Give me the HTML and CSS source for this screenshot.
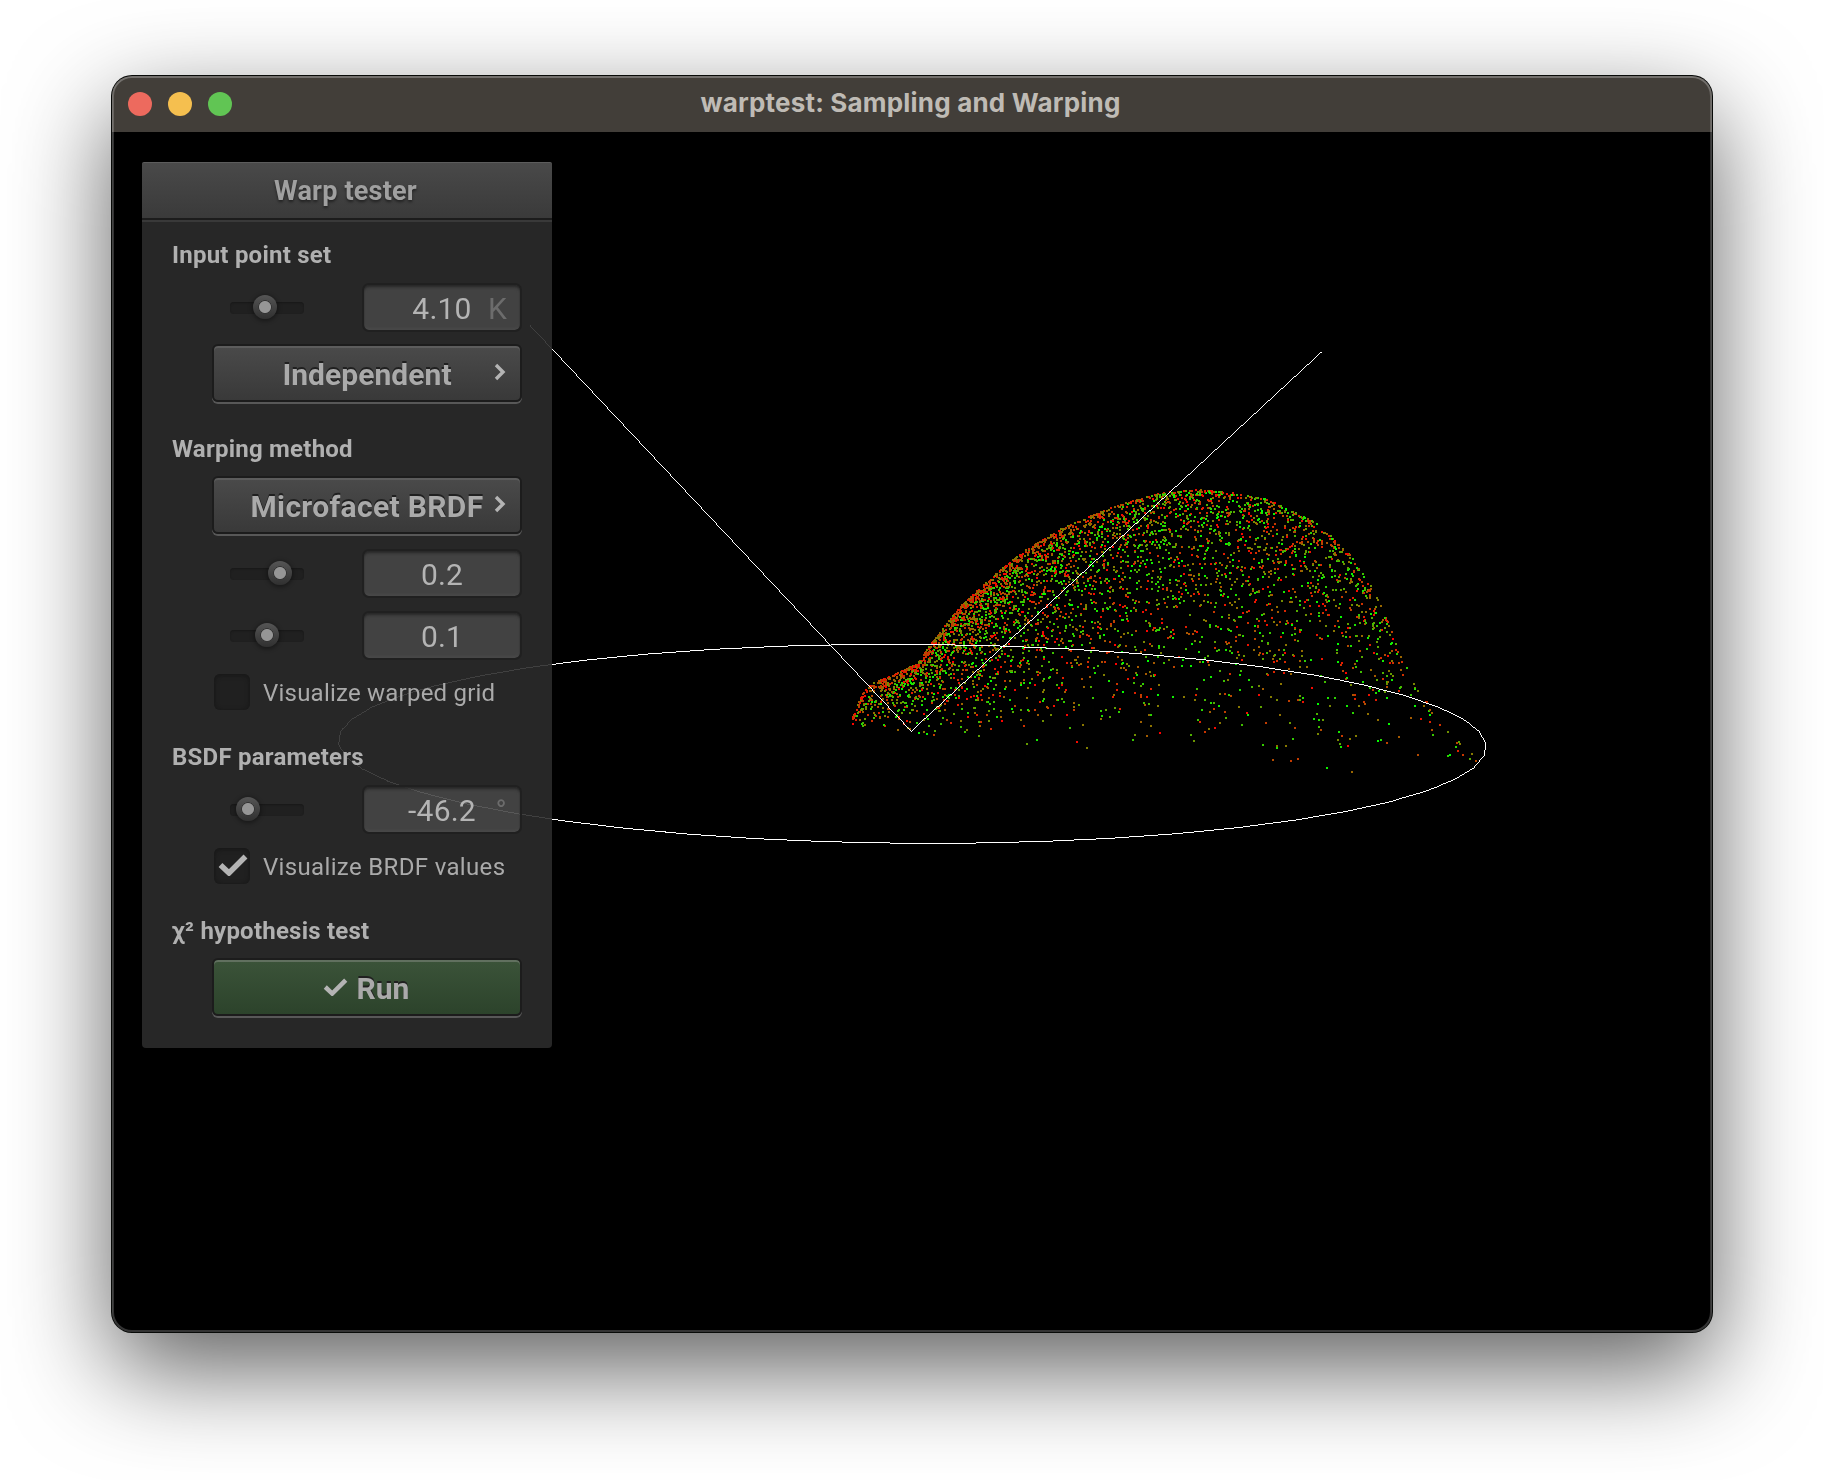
FILE: index.html
```html
<!DOCTYPE html>
<html lang="en">
<head>
<meta charset="utf-8">
<title>warptest: Sampling and Warping</title>
<link rel="stylesheet" href="styles.css">
</head>
<body>
<main class="window">
  <header class="titlebar">
    <div class="lights"><span class="light close"></span><span class="light minimize"></span><span class="light zoom"></span></div>
    <h1 class="window-title">warptest: Sampling and Warping</h1>
  </header>
  <div class="viewport">
    <canvas class="scene" id="scene" width="1600" height="1200"></canvas>
    <section class="panel">
      <h2 class="panel-title">Warp tester</h2>
      <div class="group">
        <h3 class="label">Input point set</h3>
        <div class="row">
          <div class="slider"><span class="knob" style="left:34.5px"></span></div>
          <div class="field"><span class="value">4.10</span><span class="unit">K</span></div>
        </div>
        <button class="button"><span>Independent</span><svg class="chevron" viewBox="0 0 12 18"><path d="M2 2l7 7-7 7"/></svg></button>
      </div>
      <div class="group">
        <h3 class="label">Warping method</h3>
        <button class="button"><span class="wide">Microfacet BRDF</span><svg class="chevron" viewBox="0 0 12 18"><path d="M2 2l7 7-7 7"/></svg></button>
        <div class="row after-button">
          <div class="slider"><span class="knob" style="left:50px"></span></div>
          <div class="field"><span class="value">0.2</span></div>
        </div>
        <div class="row">
          <div class="slider"><span class="knob" style="left:37px"></span></div>
          <div class="field"><span class="value">0.1</span></div>
        </div>
        <div class="check"><span class="box"></span><span class="check-text">Visualize warped grid</span></div>
      </div>
      <div class="group">
        <h3 class="label">BSDF parameters</h3>
        <div class="row">
          <div class="slider"><span class="knob" style="left:18px"></span></div>
          <div class="field"><span class="value">-46.2</span><span class="unit">°</span></div>
        </div>
        <div class="check"><span class="box"><svg class="tick" viewBox="0 0 30 22"><path d="M2.500 11l8.500 8L27.500 2.500"/></svg></span><span class="check-text wide">Visualize BRDF values</span></div>
      </div>
      <div class="group">
        <h3 class="label">χ² hypothesis test</h3>
        <button class="button run"><svg class="tick small" viewBox="0 0 30 22"><path d="M2.500 11l8.500 8L27.500 2.500"/></svg><span>Run</span></button>
      </div>
    </section>
  </div>
</main>
<script src="scene.js"></script>
</body>
</html>
```
FILE: styles.css
```css
* { box-sizing: border-box; }
body { margin: 0; height: 1480px; padding: 76px 112px; background: #fff; overflow: hidden; font-family: Roboto, "Liberation Sans", sans-serif; }
h1, h2, h3 { margin: 0; }
.window { position: relative; width: 1600px; height: 1256px; border-radius: 20px; background: #000; box-shadow: 0 0 0 1px #080a08, 0 36px 100px rgba(0,0,0,.64); }
.window::after { content: ""; position: absolute; inset: 0; border-radius: 20px; box-shadow: inset 0 0 0 2px rgba(255,255,255,.2), inset 0 1px 0 1px rgba(255,255,255,.08); pointer-events: none; }
.titlebar { display: grid; grid-template-columns: 200px 1fr 200px; align-items: center; height: 56px; border-radius: 20px 20px 0 0; background: #423e39; }
.lights { display: flex; gap: 16px; padding-left: 16px; }
.light { width: 24px; height: 24px; border-radius: 50%; }
.close { background: #ed6a5e; }
.minimize { background: #f5bf4f; }
.zoom { background: #61c554; }
.window-title { font: 700 26px/30px Inter, sans-serif; letter-spacing: .19px; color: #bfbbb5; text-align: center; padding-right: 3px; padding-bottom: 2px; }
.viewport { display: grid; height: 1200px; padding: 30px; align-items: start; justify-items: start; }
.scene { grid-area: 1 / 1; margin: -30px; border-radius: 0 0 20px 20px; }
.panel { position: relative; grid-area: 1 / 1; width: 410px; height: 886px; border-radius: 4px; background: rgba(43,43,43,.902); }
.panel-title { height: 60px; line-height: 56px; text-align: center; font-size: 27px; font-weight: 700; letter-spacing: .2px; color: #a0a0a0; text-shadow: 0 2px 3px rgba(0,0,0,.5); background: linear-gradient(#494949, #393939); border-top: 1px solid #5c5c5c; border-radius: 2px 2px 0 0; box-shadow: inset 0 -2px #393939, inset 0 -4px #1c1c1c; padding-right: 3px; }
.group { padding: 0 30px 32px; }
.group:first-of-type { padding-top: 18px; }
.label { height: 30px; line-height: 30px; margin-bottom: 14px; font-size: 24px; font-weight: 700; letter-spacing: .23px; color: #b0b0b0; white-space: nowrap; }
.label + .button { margin-top: -2px; }
.row { display: flex; justify-content: space-between; align-items: center; height: 48px; padding-left: 58px; margin-bottom: 14px; }
.row + .button { margin-top: -2px; }
.after-button { margin-top: 16px; }
.slider { position: relative; width: 74px; height: 12px; border-radius: 4px; background: #202020; box-shadow: inset 0 1px 2px #181818; }
.knob { position: absolute; top: -7px; width: 24px; height: 24px; margin-left: -12px; border-radius: 50%; background: radial-gradient(circle at 50% 50%, #969696 0 5.5px, #333 6.5px, transparent 7px), linear-gradient(#555, #303030); box-shadow: 0 1px 4px 1px rgba(0,0,0,.4); }
.field { display: grid; align-items: center; width: 160px; height: 49px; padding: 3px 15px 0 15px; margin-top: -1px; border: 2px solid #202020; border-radius: 7px; background: rgba(255,255,255,.13); background-clip: padding-box; box-shadow: inset 0 2px 3px #242424, inset 0 0 4px rgba(255,255,255,.1); font-size: 30px; line-height: 40px; color: #b4b4b4; letter-spacing: .2px; }
.value { grid-area: 1 / 1; justify-self: center; }
.unit { grid-area: 1 / 1; justify-self: end; margin-right: -2px; color: #6c6c6c; }
.button { display: grid; place-items: center; width: 310px; height: 58px; margin: 0 0 0 40px; padding: 3px 0 0; border: 2px solid #1c1c1c; border-radius: 6px; background: linear-gradient(#4a4a4a, #393939); box-shadow: 0 2px #585858, inset 0 2px #5c5c5c; font: 700 30px/40px Roboto, sans-serif; letter-spacing: .05px; color: #aaa; text-shadow: 0 -2px #202020; }
.button > span { grid-area: 1 / 1; }
.wide { letter-spacing: .34px; }
.chevron { grid-area: 1 / 1; justify-self: end; width: 12px; height: 18px; margin: 0 14px 5px 0; }
.chevron path, .tick path { fill: none; stroke: #b4b4b4; stroke-width: 3.4; }
.run { display: flex; align-items: center; justify-content: center; gap: 9px; padding-right: 2px; background: linear-gradient(#3b5339, #2c432b); box-shadow: 0 2px #585858, inset 0 2px #61705f; }
.check { display: flex; align-items: center; gap: 13px; height: 36px; padding-left: 42px; font-size: 24px; line-height: 36px; white-space: nowrap; color: #aaa; }
.check-text { padding-top: 2px; }
.check-text:not(.wide) { letter-spacing: .22px; }
.box { display: grid; place-items: center; width: 36px; height: 36px; border-radius: 6px; background: #202020; box-shadow: inset 0 1px 4px 1px #181818; }
.tick { width: 30px; height: 22px; margin-left: 2px; margin-bottom: 2px; }
.tick path { stroke-width: 5.5; }
.small { width: 25px; height: 18px; margin: 0 0 3px; }
```
FILE: scene.js
```js
(() => {
  const canvas = document.getElementById('scene');
  const ctx = canvas.getContext('2d');
  ctx.translate(-112, -132);

  let seed = 20231;
  function random() {
    seed = (seed + 0x6D2B79F5) | 0;
    let t = Math.imul(seed ^ (seed >>> 15), 1 | seed);
    t = (t + Math.imul(t ^ (t >>> 7), 61 | t)) ^ t;
    return ((t ^ (t >>> 14)) >>> 0) / 4294967296;
  }

  function interpolate(table, x) {
    for (let i = 1; i < table.length; i++) {
      if (x <= table[i][0]) {
        const [x0, y0] = table[i - 1], [x1, y1] = table[i];
        return y0 + (y1 - y0) * (x - x0) / (x1 - x0);
      }
    }
    return table[table.length - 1][1];
  }

  // Upper silhouette, lower limit and column density of the lobe.
  const upper = [[852,716],[857,703],[863,690],[873,682],[890,675],[903,669],[917,662],[930,643],[947,622],[960,605],[980,587],[1003,566],[1027,548],[1060,528],[1087,516],[1113,506],[1153,494],[1170,491],[1203,489],[1237,493],[1267,499],[1293,511],[1317,523],[1333,538],[1350,555],[1370,585],[1382,608],[1395,642],[1407,670],[1417,690],[1449,731],[1476,758]];
  const lower = [[852,724],[880,738],[910,744],[1000,750],[1110,752],[1320,772],[1400,776],[1476,767]];
  const weight = [[852,.65],[870,.9],[900,1.3],[925,1.9],[960,2.4],[1000,2.3],[1050,2],[1100,1.7],[1150,1.6],[1200,1.55],[1250,1.35],[1300,1.2],[1350,1],[1375,.7],[1395,.35],[1410,.12],[1440,.07],[1476,.04]];

  let placed = 0;
  while (placed < 4350) {
    const x = 852 + random() * 624;
    if (random() * 2.4 > interpolate(weight, x)) continue;
    const depth = Math.pow(random(), 1.55) * Math.pow(random(), .6);
    const y0 = interpolate(upper, x);
    const y = y0 + (interpolate(lower, x) - y0) * depth;
    let mix = random();
    if (x < 1120 && y - y0 < 9) mix *= .6;
    ctx.fillStyle = `rgb(${Math.round(255 * (1 - mix))},${Math.round(255 * mix)},0)`;
    ctx.fillRect(Math.round(x), Math.round(y), 2, 2);
    placed++;
  }

  // One-pixel line without antialiasing.
  function line(x0, y0, x1, y1) {
    ctx.fillStyle = '#fff';
    const steps = Math.ceil(Math.max(Math.abs(x1 - x0), Math.abs(y1 - y0)));
    for (let i = 0; i <= steps; i++) {
      ctx.fillRect(Math.floor(x0 + (x1 - x0) * i / steps), Math.floor(y0 + (y1 - y0) * i / steps), 1, 1);
    }
  }
  line(530, 325, 911.5, 731);
  line(911.5, 731, 1321.5, 352);

  function rim(k) {
    const a = -.038 + k * Math.PI / 25;
    return [912.3 + 574 * Math.cos(a), 743.8 + 3.3 * Math.cos(a) + 99.5 * Math.sin(a)];
  }
  for (let k = 0; k < 50; k++) line(...rim(k), ...rim(k + 1));
})();
```
